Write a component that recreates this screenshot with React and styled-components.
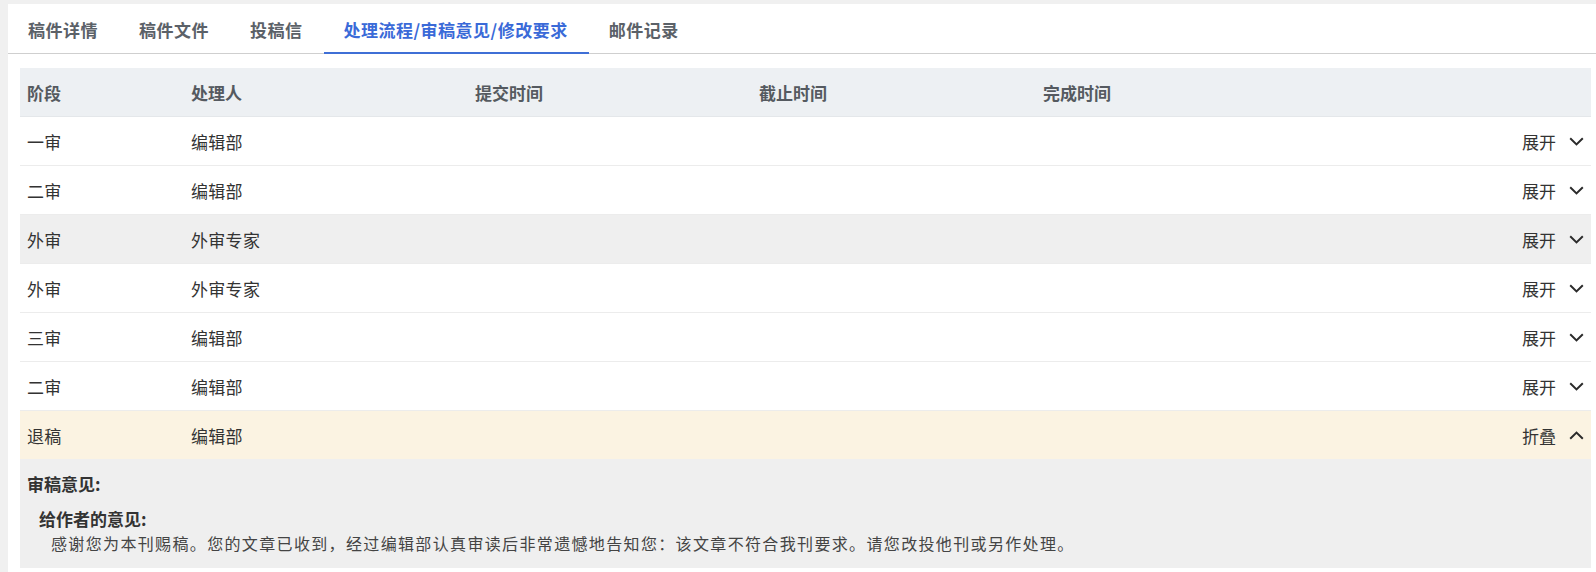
import React from "react";
import styled, { createGlobalStyle } from "styled-components";

const GlobalStyle = createGlobalStyle`
  body {
    margin: 0;
    background: #f0f0f0;
    font-family: "Noto Sans CJK SC", "Noto Sans", sans-serif;
  }
`;

const tabs = ["稿件详情", "稿件文件", "投稿信", "处理流程/审稿意见/修改要求", "邮件记录"];

const stages = [
  { stage: "一审", handler: "编辑部" },
  { stage: "二审", handler: "编辑部" },
  { stage: "外审", handler: "外审专家", tone: "hover" },
  { stage: "外审", handler: "外审专家" },
  { stage: "三审", handler: "编辑部" },
  { stage: "二审", handler: "编辑部" },
  { stage: "退稿", handler: "编辑部", tone: "open", open: true }
];

const Chevron = ({ up }) => (
  <ChevronSvg viewBox="0 0 15 9" $up={up}>
    <polyline points="1.2,1.3 7.5,7.4 13.8,1.3" />
  </ChevronSvg>
);

const App = () => {
  return (
    <>
      <GlobalStyle />
      <Panel>
        <TabBar>
          {tabs.map((t, i) => (
            <Tab key={t} $active={i === 3}>
              {t}
            </Tab>
          ))}
        </TabBar>
        <Table>
          <HeadRow>
            <HeadCell>阶段</HeadCell>
            <HeadCell>处理人</HeadCell>
            <HeadCell>提交时间</HeadCell>
            <HeadCell>截止时间</HeadCell>
            <HeadCell>完成时间</HeadCell>
            <HeadCell />
          </HeadRow>
          {stages.map((s, i) => (
            <React.Fragment key={i}>
              <Row $tone={s.tone}>
                <Cell>{s.stage}</Cell>
                <Cell>{s.handler}</Cell>
                <Cell />
                <Cell />
                <Cell />
                <Toggle>
                  {s.open ? "折叠" : "展开"}
                  <Chevron up={s.open} />
                </Toggle>
              </Row>
              {s.open && (
                <Detail>
                  <DetailTitle>审稿意见:</DetailTitle>
                  <OpinionTitle>给作者的意见:</OpinionTitle>
                  <OpinionText>
                    感谢您为本刊赐稿。您的文章已收到，经过编辑部认真审读后非常遗憾地告知您：该文章不符合我刊要求。请您改投他刊或另作处理。
                  </OpinionText>
                </Detail>
              )}
            </React.Fragment>
          ))}
        </Table>
      </Panel>
    </>
  );
};

const Panel = styled.div`
  margin: 4px 0 0 8px;
  background: #fff;
  min-height: 568px;
  box-sizing: border-box;
`;

const TabBar = styled.div`
  display: flex;
  height: 49px;
  border-bottom: 1px solid #cfcfcf;
`;

const Tab = styled.div`
  display: flex;
  align-items: center;
  box-sizing: border-box;
  height: 50px;
  padding: 2px 21px 0 20px;
  margin-bottom: -1px;
  font-size: 17px;
  font-weight: 700;
  letter-spacing: 0.5px;
  color: ${({ $active }) => ($active ? "#3a6ad8" : "#5b6168")};
  border-bottom: 2px solid ${({ $active }) => ($active ? "#3f6fd6" : "transparent")};
`;

const Table = styled.div`
  margin: 14px 5px 0 12px;
  display: flex;
  flex-direction: column;
`;

const gridCols = "164px 284px 284px 284px 1fr auto";

const HeadRow = styled.div`
  display: grid;
  grid-template-columns: ${gridCols};
  height: 48px;
  align-items: center;
  background: #edf0f3;
  border-bottom: 1px solid #e4e7ea;
`;

const HeadCell = styled.div`
  padding-left: 7px;
  font-size: 17px;
  font-weight: 700;
  color: #555a60;
`;

const rowBg = {
  hover: "#efefef",
  open: "#fbf3e2"
};

const Row = styled.div`
  display: grid;
  grid-template-columns: ${gridCols};
  height: 48px;
  align-items: center;
  background: ${({ $tone }) => rowBg[$tone] || "#fff"};
  border-bottom: 1px solid #ececec;
`;

const Cell = styled.div`
  padding-left: 7px;
  font-size: 17px;
  letter-spacing: 0.3px;
  color: #333;
`;

const Toggle = styled.div`
  display: flex;
  align-items: center;
  gap: 13px;
  padding-right: 7px;
  font-size: 17px;
  color: #333;
  cursor: pointer;
`;

const ChevronSvg = styled.svg`
  width: 15px;
  height: 9px;
  fill: none;
  stroke: #2b2b2b;
  stroke-width: 2;
  transform: ${({ $up }) => ($up ? "rotate(180deg)" : "none")};
`;

const Detail = styled.div`
  background: #efefef;
  padding: 13px 7px 13px 7px;
  margin-top: -1px;
`;

const DetailTitle = styled.div`
  font-size: 17px;
  font-weight: 700;
  color: #333;
  line-height: 24px;
`;

const OpinionTitle = styled.div`
  margin: 11px 0 0 12px;
  font-size: 17px;
  font-weight: 700;
  color: #333;
  line-height: 24px;
`;

const OpinionText = styled.div`
  margin-left: 24px;
  font-size: 16px;
  letter-spacing: 1.35px;
  color: #444;
  line-height: 24px;
`;

export default App;
